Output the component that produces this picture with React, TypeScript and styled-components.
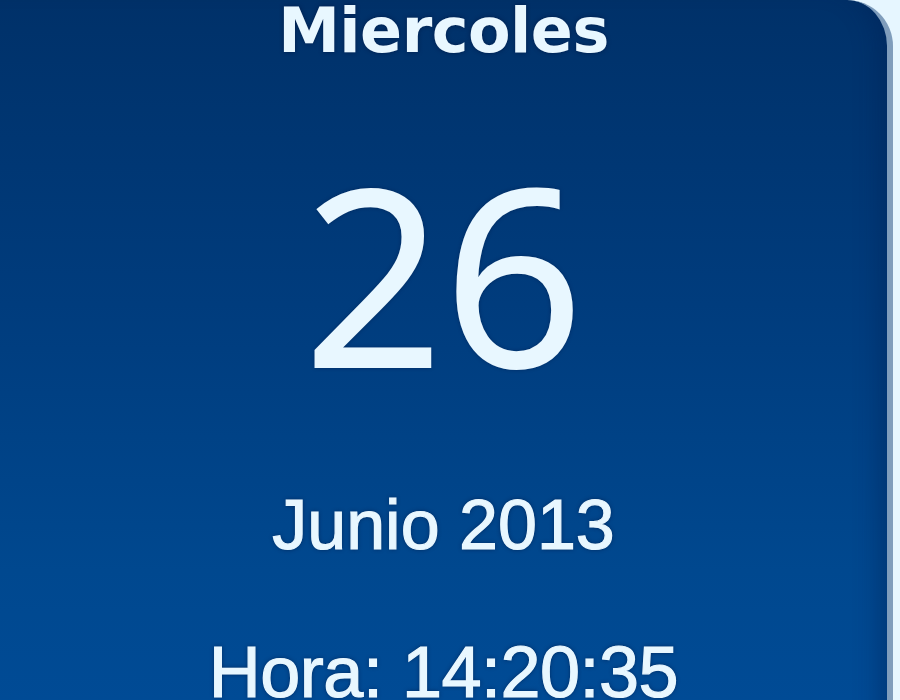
import React from "react";
import styled, { createGlobalStyle } from "styled-components";

const Global = createGlobalStyle`
  html, body { margin: 0; padding: 0; background: #e6f6ff; }
  body { width: 900px; height: 700px; overflow: hidden; }
`;

const Page = styled.div`
  width: 900px;
  height: 700px;
  display: flex;
  background: #e6f6ff;
  overflow: hidden;
`;

const Panel = styled.div`
  width: 887px;
  height: 760px;
  flex: none;
  display: flex;
  flex-direction: column;
  align-items: center;
  background: linear-gradient(180deg, #003169 0%, #003c7d 40%, #00488f 75%, #004c98 100%);
  border-right: 6px solid #7f9dbc;
  border-top-right-radius: 46px;
  box-shadow: inset -26px 0 24px -18px rgba(0, 30, 80, 0.4);
  color: #e8f7ff;
  text-shadow: 0 0 4px rgba(0, 20, 60, 0.7);
`;

const Label = styled.div<{ $size: number; $top: number; $bold?: boolean; $family: string; $spacing?: number; $stroke?: number; $weight?: number }>`
  font-family: ${(p) => p.$family};
  font-size: ${(p) => p.$size}px;
  font-weight: ${(p) => p.$weight ?? (p.$bold ? 700 : 400)};
  line-height: 1;
  margin-top: ${(p) => p.$top}px;
  letter-spacing: ${(p) => p.$spacing ?? 0}px;
  -webkit-text-stroke: ${(p) => p.$stroke ?? 0}px #e8f7ff;
  white-space: nowrap;
`;

export default function App() {
  return (
    <>
      <Global />
      <Page>
        <Panel>
          <Label $size={62} $top={0} $bold $family={'"DejaVu Sans", sans-serif'} $spacing={-0.5}>
            Miercoles
          </Label>
          <Label $size={245} $top={88} $weight={500} $stroke={2} $family={'"Open Sans", "DejaVu Sans", sans-serif'}>
            26
          </Label>
          <Label $size={70} $top={95} $stroke={1.2} $family={'"Liberation Sans", Arial, sans-serif'}>
            Junio 2013
          </Label>
          <Label $size={72} $top={76} $stroke={1.2} $spacing={-0.5} $family={'"Liberation Sans", Arial, sans-serif'}>
            Hora: 14:20:35
          </Label>
        </Panel>
      </Page>
    </>
  );
}
